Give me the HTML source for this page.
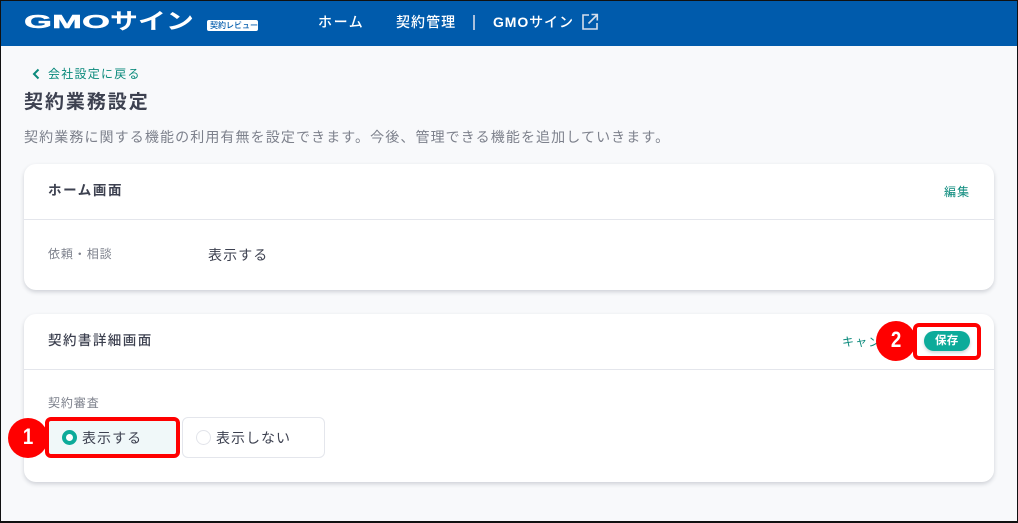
<!DOCTYPE html>
<html lang="ja"><head><meta charset="utf-8"><style>
*{box-sizing:border-box}
html,body{margin:0;padding:0;width:1018px;height:523px;overflow:hidden}
body{position:relative;background:#f8f9fb;font-family:"Liberation Sans","Noto Sans CJK JP",sans-serif;color:#3d4150}
.t{position:absolute;white-space:nowrap;line-height:20px}
.frame{position:absolute;inset:0;border:1px solid #111;border-top-width:1px;border-bottom-width:2px;pointer-events:none;z-index:20}
.hd{position:absolute;left:0;top:0;width:1018px;height:46px;background:#005bac}
.card{position:absolute;left:24px;width:970px;background:#fff;border-radius:12px;box-shadow:0 2px 4px rgba(40,50,70,.2)}
.line{position:absolute;left:24px;width:970px;height:1px;background:#e4e6ec}
.green{color:#0b8a7c}
.nav{color:#fff;font-size:14px;letter-spacing:1.1px;font-weight:500}
.red{position:absolute;border:4px solid #f00;border-radius:6px;z-index:10}
.num{position:absolute;width:40px;height:40px;border-radius:50%;background:#f00;color:#fff;font:bold 22px/38px "Liberation Sans",sans-serif;text-align:center;z-index:11}
.num span{display:inline-block;transform:scaleX(.85)}
</style></head><body>
<div class="hd"></div>
<div class="t" style="left:24px;top:8px;font-size:18px;line-height:28px;font-weight:700;color:#fff;transform:scaleX(2);transform-origin:left;-webkit-text-stroke:.4px #fff">GMO</div>
<div class="t" style="left:110px;top:8px;font-size:22px;line-height:28px;font-weight:700;color:#fff;transform:scaleX(1.27);transform-origin:left">サイン</div>
<div class="t" style="left:207px;top:20px;width:51px;height:11px;background:#fff;border-radius:2px;color:#005bac;font-size:8px;line-height:11px;font-weight:500;padding-left:3px">契約レビュー</div>
<div class="t nav" style="left:318px;top:12px;letter-spacing:1.6px">ホーム</div>
<div class="t nav" style="left:396px;top:12px;letter-spacing:1.05px">契約管理</div>
<div style="position:absolute;left:473px;top:15px;width:1.5px;height:15px;background:#a9c0dc"></div>
<div class="t nav" style="left:493px;top:12px;letter-spacing:.9px"><b>GMO</b>サイン</div>
<svg style="position:absolute;left:581px;top:13px" width="18" height="18" viewBox="0 0 18 18" fill="none" stroke="#d5deeb" stroke-width="1.6"><path d="M8 2H2v14h14v-6"/><path d="M7.5 10.5L16 2M10.5 1.5H16.3V7.5"/></svg>

<svg style="position:absolute;left:31px;top:68px" width="10" height="12" viewBox="0 0 10 12" fill="none" stroke="#0b8a7c" stroke-width="2"><path d="M7.5 1.5L3 6l4.5 4.5"/></svg>
<div class="t green" style="left:48px;top:64px;font-size:12px;letter-spacing:1.25px;">会社設定に戻る</div>
<div class="t" style="left:24px;top:92px;font-size:19px;line-height:22px;font-weight:700;letter-spacing:1.95px;color:#3d4150">契約業務設定</div>
<div class="t" style="left:24px;top:127px;font-size:14px;letter-spacing:1.11px;color:#7d818c">契約業務に関する機能の利用有無を設定できます。今後、管理できる機能を追加していきます。</div>

<div class="card" style="top:164px;height:126px"></div>
<div class="line" style="top:219px"></div>
<div class="t" style="left:48px;top:181px;font-size:13.5px;font-weight:700;letter-spacing:1.6px;">ホーム画面</div>
<div class="t green" style="left:944px;top:182px;font-size:12px;letter-spacing:1.1px;">編集</div>
<div class="t" style="left:48px;top:244px;font-size:12px;letter-spacing:.9px;color:#7d818c">依頼・相談</div>
<div class="t" style="left:208px;top:245px;font-size:14px;letter-spacing:1.1px;color:#3d4150">表示する</div>

<div class="card" style="top:314px;height:168px"></div>
<div class="line" style="top:369px"></div>
<div class="t" style="left:48px;top:331px;font-size:13.5px;font-weight:500;letter-spacing:1.45px;">契約書詳細画面</div>
<div class="t green" style="left:842px;top:332px;font-size:12px;letter-spacing:1.1px;">キャンセル</div>
<div style="position:absolute;left:924px;top:331px;width:46px;height:20px;border-radius:10px;background:#0dab9a;box-shadow:0 2px 3px rgba(40,50,70,.2);z-index:5"></div>
<div class="t" style="left:935px;top:331px;font-size:11.5px;font-weight:700;color:#fff;z-index:6;letter-spacing:.3px">保存</div>
<div class="t" style="left:48px;top:393px;font-size:12px;letter-spacing:.9px;color:#7d818c">契約審査</div>

<div style="position:absolute;left:46px;top:417px;width:133px;height:41px;background:#f0f8f9;border-radius:6px"></div>
<div style="position:absolute;left:182px;top:417px;width:143px;height:41px;background:#fff;border:1px solid #e4e6ec;border-radius:6px"></div>
<div style="position:absolute;left:62px;top:430px;width:15px;height:15px;border-radius:50%;border:4px solid #0dab9a;background:#fff"></div>
<div style="position:absolute;left:196px;top:430px;width:15px;height:15px;border-radius:50%;border:1px solid #e2e4ea;background:#fff"></div>
<div class="t" style="left:82px;top:428px;font-size:14px;letter-spacing:1.05px;">表示する</div>
<div class="t" style="left:216px;top:428px;font-size:14px;letter-spacing:1px;">表示しない</div>

<div class="red" style="left:45px;top:417px;width:135px;height:41px"></div>
<div class="red" style="left:913px;top:323px;width:68px;height:37px"></div>
<div class="num" style="left:8px;top:418px"><span>1</span></div>
<div class="num" style="left:876px;top:321px"><span>2</span></div>
<div class="frame"></div>
</body></html>
